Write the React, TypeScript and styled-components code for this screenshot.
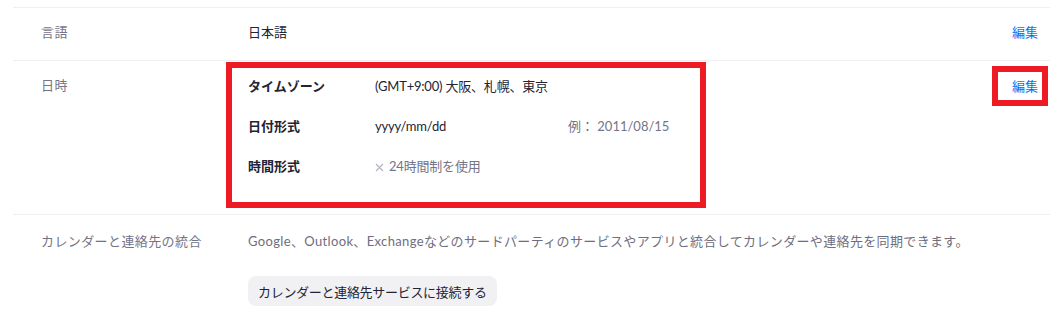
import styled, { createGlobalStyle } from "styled-components";

const GlobalStyle = createGlobalStyle`
    body {
        margin:0;
        background:#ffffff;
        font-family:"Lato","Noto Sans CJK JP",sans-serif;
        font-size:13px;
        line-height:20px;
        color:#232333;
    }
`;

const Page = styled.div`
    padding:7px 0 0 13px;
`;

const Section = styled.div<{ $pb: number }>`
    display:grid;
    grid-template-columns:235px 1fr auto;
    border-top:1px solid #efeff2;
    padding-bottom:${p => p.$pb}px;
`;

const Label = styled.div<{ $pt: number }>`
    padding:${p => p.$pt}px 0 0 28px;
    color:#747487;
    letter-spacing:0.4px;
`;

const Body = styled.div<{ $pt: number }>`
    padding-top:${p => p.$pt}px;
    min-width:0;
`;

const Value = styled.div`
    color:#232333;
`;

const Action = styled.div<{ $pt: number }>`
    padding:${p => p.$pt}px 12px 0 0;
`;

const EditLink = styled.a<{ $marked?: boolean }>`
    display:inline-block;
    color:#0e72ed;
    text-decoration:none;
    cursor:pointer;
    padding-left:${p => (p.$marked ? 10 : 0)}px;
    outline:${p => (p.$marked ? "6px solid #ed1c24" : "none")};
    outline-offset:4px;
`;

const Highlight = styled.div`
    width:480px;
    box-sizing:border-box;
    margin:1px 0 0 -22px;
    border:6px solid #ed1c24;
    padding:8px 16px 26px;
    display:grid;
    grid-template-columns:127px 193px auto;
    row-gap:20px;
`;

const FieldName = styled.div`
    font-weight:700;
    color:#232333;
`;

const FieldValue = styled.div<{ $muted?: boolean }>`
    color:${p => (p.$muted ? "#747487" : "#232333")};
    display:flex;
    align-items:center;
    gap:5px;
    white-space:nowrap;
    letter-spacing:-0.2px;
`;

const Example = styled.div`
    color:#747487;
    white-space:nowrap;
`;

const Description = styled.div`
    color:#6e6e7e;
    white-space:nowrap;
    letter-spacing:0.35px;
`;

const ConnectButton = styled.button`
    margin-top:25px;
    height:30px;
    padding:0 10px;
    border:none;
    border-radius:8px;
    background:#f1f1f4;
    color:#232333;
    font-family:inherit;
    font-size:13px;
    letter-spacing:-0.3px;
    cursor:pointer;
`;

function CrossIcon() {
    return (
        <svg width="9" height="9" viewBox="0 0 9 9" style={{ marginTop: 2 }}>
            <path d="M1 1L8 8M8 1L1 8" stroke="#b4b4bc" strokeWidth="1.1" fill="none" />
        </svg>
    );
}

function App() {
    return (
        <Page>
            <GlobalStyle />
            <Section $pb={18}>
                <Label $pt={14}>言語</Label>
                <Body $pt={14}>
                    <Value>日本語</Value>
                </Body>
                <Action $pt={14}>
                    <EditLink>編集</EditLink>
                </Action>
            </Section>
            <Section $pb={6}>
                <Label $pt={14}>日時</Label>
                <Body $pt={0}>
                    <Highlight>
                        <FieldName>タイムゾーン</FieldName>
                        <FieldValue>(GMT+9:00) 大阪、札幌、東京</FieldValue>
                        <div />
                        <FieldName>日付形式</FieldName>
                        <FieldValue>yyyy/mm/dd</FieldValue>
                        <Example>例： 2011/08/15</Example>
                        <FieldName>時間形式</FieldName>
                        <FieldValue $muted>
                            <CrossIcon />
                            24時間制を使用
                        </FieldValue>
                        <div />
                    </Highlight>
                </Body>
                <Action $pt={15}>
                    <EditLink $marked>編集</EditLink>
                </Action>
            </Section>
            <Section $pb={20}>
                <Label $pt={16}>カレンダーと連絡先の統合</Label>
                <Body $pt={16}>
                    <Description>
                        Google、Outlook、Exchangeなどのサードパーティのサービスやアプリと統合してカレンダーや連絡先を同期できます。
                    </Description>
                    <ConnectButton>カレンダーと連絡先サービスに接続する</ConnectButton>
                </Body>
                <div />
            </Section>
        </Page>
    );
}

export default App;
